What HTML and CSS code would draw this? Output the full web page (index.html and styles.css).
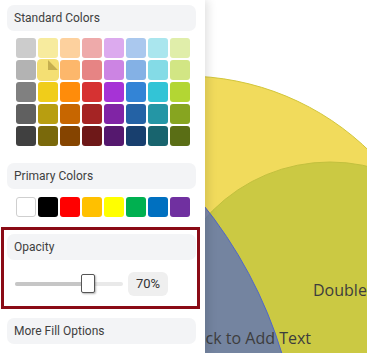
FILE: index.html
```html
<!DOCTYPE html>
<html lang="en">
<head>
<meta charset="utf-8">
<title>Fill Options</title>
<link rel="stylesheet" href="styles.css">
</head>
<body>
<div class="stage">
  <svg class="canvas" viewBox="0 0 367 353" xmlns="http://www.w3.org/2000/svg">
    <circle class="shape-yellow" cx="185" cy="340" r="264"/>
    <circle class="shape-green" cx="330" cy="328" r="166"/>
    <circle class="shape-blue" cx="-141" cy="482" r="442"/>
    <text class="shape-label" x="313" y="296">Double Click to Add Text</text>
    <text class="shape-label end" x="311" y="344">Click to Add Text</text>
  </svg>

  <aside class="panel">
    <div class="title">Standard Colors</div>
    <div class="grid">
      <span class="sw" style="background:#cccccc"></span>
      <span class="sw" style="background:#f7eb9e"></span>
      <span class="sw" style="background:#fdd19e"></span>
      <span class="sw" style="background:#eeaaaa"></span>
      <span class="sw" style="background:#dcaaee"></span>
      <span class="sw" style="background:#aac8ee"></span>
      <span class="sw" style="background:#aae6ee"></span>
      <span class="sw" style="background:#e0eeaa"></span>

      <span class="sw" style="background:#b3b3b3"></span>
      <span class="sw selected" style="background:#f4df73"></span>
      <span class="sw" style="background:#fdb76b"></span>
      <span class="sw" style="background:#e68484"></span>
      <span class="sw" style="background:#cc84e3"></span>
      <span class="sw" style="background:#84b1e5"></span>
      <span class="sw" style="background:#84dbe6"></span>
      <span class="sw" style="background:#d2e684"></span>

      <span class="sw" style="background:#808080"></span>
      <span class="sw" style="background:#f0cd1a"></span>
      <span class="sw" style="background:#ff8c0a"></span>
      <span class="sw" style="background:#d63232"></span>
      <span class="sw" style="background:#a633d6"></span>
      <span class="sw" style="background:#3384d6"></span>
      <span class="sw" style="background:#33c4d6"></span>
      <span class="sw" style="background:#b3d633"></span>

      <span class="sw" style="background:#606060"></span>
      <span class="sw" style="background:#b89e10"></span>
      <span class="sw" style="background:#c76600"></span>
      <span class="sw" style="background:#a52424"></span>
      <span class="sw" style="background:#8024a5"></span>
      <span class="sw" style="background:#2462a5"></span>
      <span class="sw" style="background:#2496a5"></span>
      <span class="sw" style="background:#87a520"></span>

      <span class="sw" style="background:#404040"></span>
      <span class="sw" style="background:#7a690b"></span>
      <span class="sw" style="background:#854400"></span>
      <span class="sw" style="background:#6e1818"></span>
      <span class="sw" style="background:#55186e"></span>
      <span class="sw" style="background:#183f6e"></span>
      <span class="sw" style="background:#18646e"></span>
      <span class="sw" style="background:#5a6e15"></span>
    </div>

    <div class="title gap-title">Primary Colors</div>
    <div class="grid primary">
      <span class="sw white"></span>
      <span class="sw" style="background:#000000"></span>
      <span class="sw" style="background:#ff0000"></span>
      <span class="sw" style="background:#ffc000"></span>
      <span class="sw" style="background:#ffff00"></span>
      <span class="sw" style="background:#00b050"></span>
      <span class="sw" style="background:#0070c0"></span>
      <span class="sw" style="background:#7030a0"></span>
    </div>

    <section class="focus">
      <div class="title inner">Opacity</div>
      <div class="slider-row">
        <div class="track">
          <div class="fill" style="width:73px"></div>
          <div class="thumb" style="left:66px"></div>
        </div>
        <div class="value">70%</div>
      </div>
    </section>

    <div class="title more">More Fill Options</div>
  </aside>
</div>
</body>
</html>
```

FILE: styles.css
```css
html, body {
  margin: 0;
  padding: 0;
  background: #ffffff;
}

body {
  width: 367px;
  height: 353px;
  overflow: hidden;
  font-family: Roboto, "Liberation Sans", sans-serif;
}

.stage {
  display: grid;
  width: 367px;
  height: 353px;
}

.canvas {
  grid-area: 1 / 1;
  width: 367px;
  height: 353px;
  display: block;
}

.shape-yellow {
  fill: #f1db5c;
  stroke: #d2c63c;
  stroke-width: 1;
}

.shape-green {
  fill: #cbc943;
  stroke: #c2c03e;
  stroke-width: 1;
}

.shape-blue {
  fill: #4f66c8;
  fill-opacity: 0.7;
  stroke: #4f66c8;
  stroke-width: 1;
}

.shape-label {
  font-family: "Open Sans", "DejaVu Sans", sans-serif;
  font-size: 16px;
  fill: #3d3d3d;
}

.shape-label.end {
  text-anchor: end;
}

.panel {
  grid-area: 1 / 1;
  position: relative;
  z-index: 1;
  width: 205px;
  height: 353px;
  box-sizing: border-box;
  padding-top: 5px;
  background: #ffffff;
  box-shadow: 3px 0 9px rgba(0, 0, 0, 0.12);
  display: flex;
  flex-direction: column;
}

.title {
  margin-left: 7px;
  width: 189px;
  height: 26px;
  box-sizing: border-box;
  padding-left: 7px;
  line-height: 26px;
  font-size: 12px;
  color: #404040;
  background: #f3f4f6;
  border-radius: 7px;
  flex: none;
}

.grid {
  margin: 7px 0 0 16px;
  display: grid;
  grid-template-columns: repeat(8, 20px);
  grid-auto-rows: 20px;
  gap: 2px;
}

.sw {
  display: block;
  border-radius: 3px;
  position: relative;
  box-sizing: border-box;
}

.sw.selected {
  transform: scale(1.1);
  border-radius: 4px;
}

.sw.selected::after {
  content: "";
  position: absolute;
  top: 1px;
  right: 1px;
  width: 9px;
  height: 9px;
  background: #c6af4f;
  clip-path: polygon(0 0, 0 100%, 100% 100%);
}

.sw.white {
  background: #ffffff;
  border: 1px solid #cfcfcf;
}

.gap-title {
  margin-top: 17px;
}

.grid.primary {
  margin-top: 8px;
}

.focus {
  margin: 10px 0 0 1px;
  width: 199px;
  box-sizing: border-box;
  border: 3px solid #8a0b16;
  padding: 4px 0 10px 0;
}

.title.inner {
  margin-left: 3px;
}

.slider-row {
  margin: 12px 0 0 11px;
  height: 24px;
  display: flex;
  align-items: center;
}

.track {
  position: relative;
  width: 108px;
  height: 4px;
  border-radius: 2px;
  background: #e9e9e9;
}

.fill {
  height: 4px;
  border-radius: 2px;
  background: #c6c6c6;
}

.thumb {
  position: absolute;
  top: -8px;
  width: 14px;
  height: 19px;
  box-sizing: border-box;
  background: #ffffff;
  border: 1px solid #555555;
  border-radius: 2px;
  box-shadow: 1px 1px 2px rgba(0, 0, 0, 0.3);
}

.value {
  margin-left: 5px;
  width: 40px;
  height: 24px;
  line-height: 24px;
  text-align: center;
  font-size: 13px;
  color: #333333;
  background: #efefef;
  border-radius: 6px;
}

.title.more {
  margin-top: 9px;
}
```
